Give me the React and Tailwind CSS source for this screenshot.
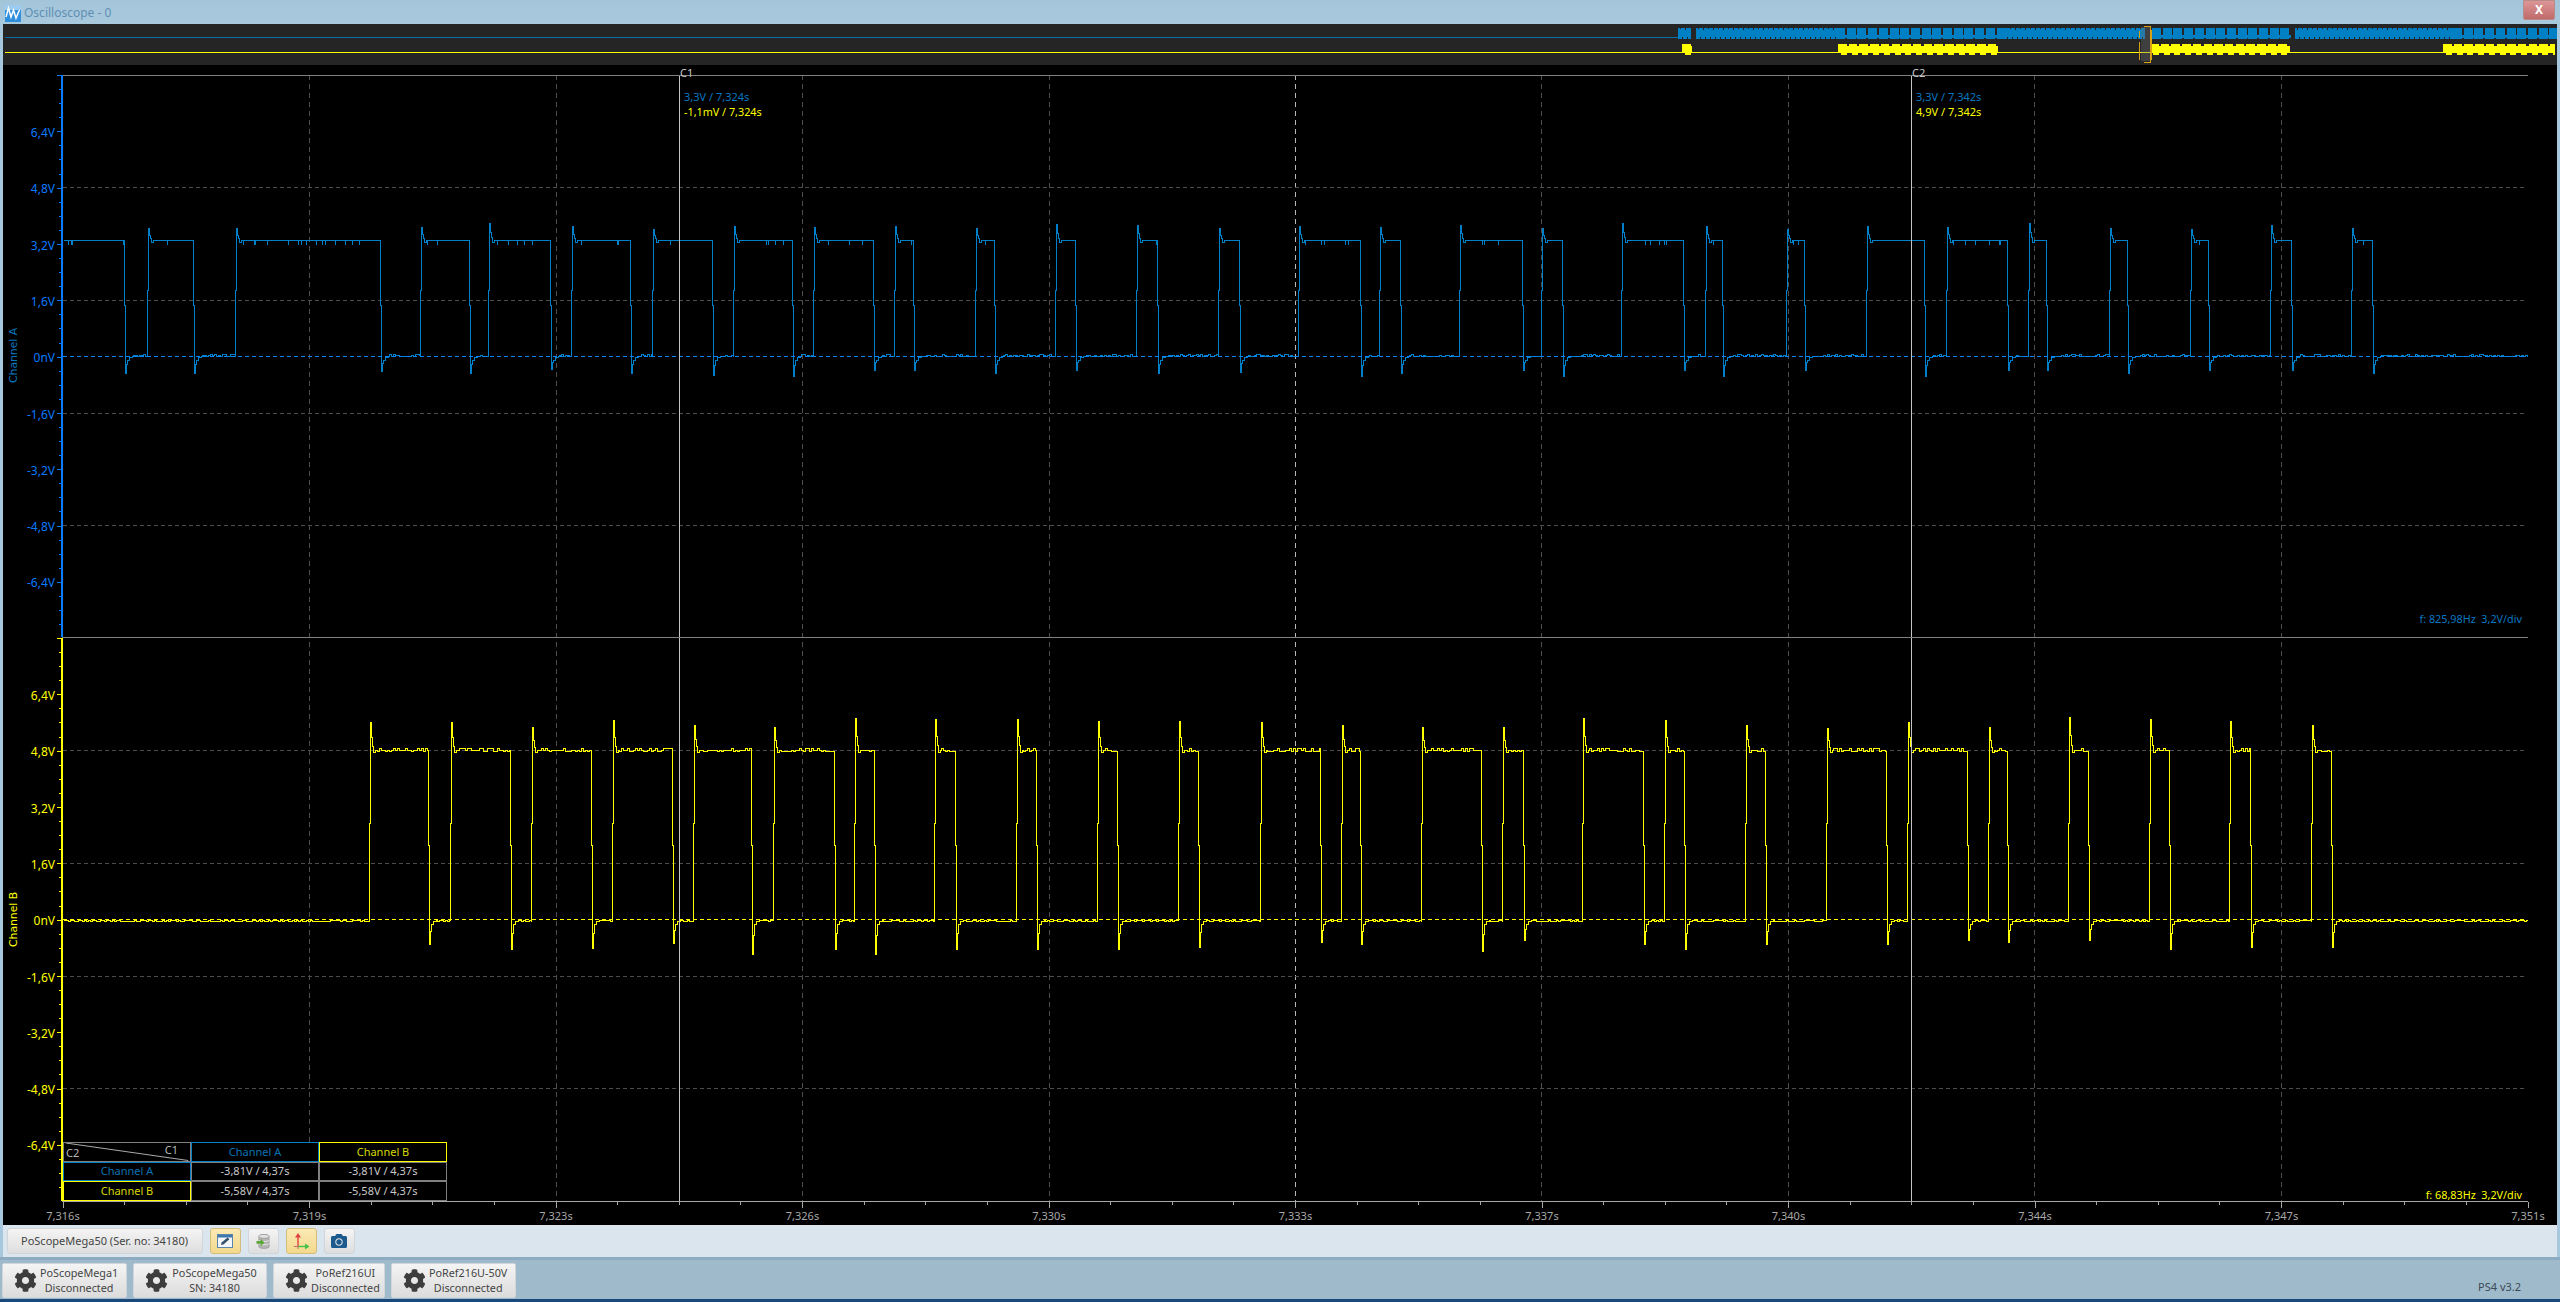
import React from 'react';
import { FaCog, FaCamera } from 'react-icons/fa';

// rise, fall, peak y, undershoot y
const BLUE_PULSES = [
  [null, 124, 0, 373], [148, 193, 228, 373], [236, 380, 228, 371], [421, 469, 227, 373], [489, 550, 223, 369],
  [572, 630, 226, 373], [653, 712, 229, 375], [734, 792, 226, 376], [814, 873, 227, 370], [895, 913, 226, 370],
  [976, 994, 228, 373], [1056, 1075, 224, 370], [1137, 1157, 225, 373], [1219, 1239, 228, 372], [1299, 1360, 226, 376],
  [1380, 1400, 227, 373], [1460, 1522, 225, 370], [1542, 1562, 228, 376], [1622, 1683, 223, 370], [1706, 1722, 226, 376],
  [1787, 1804, 229, 370], [1867, 1924, 226, 376], [1947, 2007, 227, 370], [2029, 2046, 223, 370], [2110, 2127, 228, 373],
  [2191, 2208, 229, 370], [2271, 2291, 225, 370], [2352, 2372, 228, 373],
];

const YELLOW_PULSES = [
  [370, 428, 722, 944], [451, 510, 722, 949], [532, 591, 727, 948], [613, 672, 720, 943], [694, 751, 725, 954],
  [774, 834, 727, 949], [855, 874, 718, 954], [935, 955, 719, 949], [1017, 1036, 719, 949], [1098, 1117, 721, 949],
  [1179, 1198, 721, 947], [1261, 1320, 722, 942], [1342, 1360, 725, 944], [1422, 1481, 727, 951], [1503, 1523, 727, 940],
  [1583, 1643, 718, 944], [1665, 1684, 720, 949], [1746, 1765, 725, 944], [1827, 1886, 728, 944], [1908, 1967, 722, 940],
  [1989, 2007, 727, 942], [2069, 2088, 717, 940], [2150, 2169, 719, 949], [2230, 2250, 721, 947], [2312, 2331, 725, 947],
];

const makeRng = (seed) => () => {
  seed = (seed * 1664525 + 1013904223) % 4294967296;
  return seed / 4294967296;
};

const buildTrace = (pulses, hi, lo, seed, yellow) => {
  const rng = makeRng(seed);
  const flatLow = (from, to, out) => {
    for (let x = from; x < to; x += 2) {
      const r = rng();
      if (yellow) {
        out.push(`H${x + 1}V${r < 0.5 ? lo : lo + 1}`);
      } else {
        out.push(`H${x + 1}V${r < 0.45 ? lo : r < 0.8 ? lo - 1 : lo - 2}`);
      }
    }
    out.push(`H${to}V${lo}`);
  };
  const flatHigh = (from, to, out) => {
    for (let x = from; x < to - 1; x += 1) {
      const r = rng();
      if (yellow) {
        if (x % 2 === 0) out.push(`H${x + 1}V${r < 0.4 ? hi : r < 0.7 ? hi + 1 : hi - 2}`);
      } else if (r < 0.07) {
        out.push(`H${x + 1}V${hi + 4}V${hi}`);
      }
    }
    out.push(`H${to}V${hi}`);
  };

  const d = [];
  let x = 63;
  pulses.forEach(([rise, fall, peak, under]) => {
    if (rise === null) {
      d.push(`M63 ${hi}`);
      flatHigh(63, fall, d);
    } else {
      if (d.length === 0) d.push(`M63 ${lo}`);
      flatLow(x, rise - 1, d);
      const jog = Math.round(lo - (lo - hi) * 0.57);
      d.push(`H${rise - 1}V${jog}H${rise}V${peak}`);
      d.push(`H${rise + 1}V${Math.round(peak + (hi - peak) * 0.55)}`);
      d.push(`H${rise + 2}V${Math.round(peak + (hi - peak) * 0.85)}`);
      d.push(`H${rise + 3}V${hi + 2}H${rise + 5}V${hi}`);
      flatHigh(rise + 5, fall, d);
    }
    const jog2 = Math.round(hi + (lo - hi) * 0.56);
    d.push(`H${fall}V${jog2}H${fall + 1}V${under}`);
    d.push(`H${fall + 2}V${Math.round(lo + (under - lo) * 0.45)}`);
    d.push(`H${fall + 3}V${lo + 4}H${fall + 5}V${lo + 1}H${fall + 8}V${lo}`);
    x = fall + 8;
  });
  flatLow(x, 2527, d);
  return d.join('');
};

const blueTrace = buildTrace(BLUE_PULSES, 240, 356, 7, false);
const yellowTrace = buildTrace(YELLOW_PULSES, 750, 920, 19, true);

const VERTICAL_GRID = [309.5, 556.5, 802.5, 1049.5, 1541.5, 1788.5, 2034.5, 2281.5];
const TIME_LABELS = ['7,316s', '7,319s', '7,323s', '7,326s', '7,330s', '7,333s', '7,337s', '7,340s', '7,344s', '7,347s', '7,351s'];
const VOLTS = ['6,4V', '4,8V', '3,2V', '1,6V', '0nV', '-1,6V', '-3,2V', '-4,8V', '-6,4V'];

const Overview = () => {
  const blueDense = [[1678, 1691], [1696, 1836], [2003, 2145], [2295, 2453]];
  const bluePulses = [[1836, 2001], [2152, 2290], [2453, 2555]];
  const yellowZones = [[1682, 1692], [1838, 1998], [2150, 2290], [2443, 2555]];
  const period = 10.7;
  const blocks = [];
  blueDense.forEach(([a, b]) => {
    blocks.push(<rect key={`d${a}`} x={a} y={28} width={b - a} height={11} fill="#0080c4" />);
    for (let x = a + 2; x < b - 1; x += 5) {
      blocks.push(<rect key={`n${a}-${x}`} x={x} y={28} width={1} height={x % 2 ? 2 : 1} fill="#252525" />);
      blocks.push(<rect key={`m${a}-${x}`} x={x + 2} y={37} width={1} height={2} fill="#252525" />);
    }
  });
  bluePulses.forEach(([a, b]) => {
    for (let x = a; x < b - 3; x += period) {
      blocks.push(<rect key={`p${x}`} x={x} y={28} width={9} height={11} fill="#0080c4" />);
      blocks.push(<rect key={`q${x}`} x={x + 9} y={35} width={1.7} height={3} fill="#0080c4" />);
    }
  });
  yellowZones.forEach(([a, b]) => {
    blocks.push(<rect key={`y${a}`} x={a} y={46} width={b - a} height={7} fill="#ffff00" />);
    for (let x = a; x < b - 2; x += period) {
      blocks.push(<rect key={`yt${x}`} x={x} y={44} width={Math.min(8.5, b - x)} height={2} fill="#ffff00" />);
      blocks.push(<rect key={`yb${x}`} x={x + 3} y={53} width={Math.min(6, b - x - 3)} height={2} fill="#ffff00" />);
    }
  });

  return (
    <svg viewBox="3 24 2554 41" className="block w-[2554px] h-[41px] bg-[#252525]" shapeRendering="crispEdges">
      <rect x={5} y={37} width={1673} height={1} fill="#0a6ea8" />
      <rect x={5} y={52} width={2550} height={1} fill="#ffff00" />
      {blocks}
      <rect x={2141} y={27} width={10} height={34} fill="#707070" fillOpacity="0.35" />
      <path d="M2144 26.5H2150.5V62H2144M2139.5 31V38M2139.5 42V60M2151.5 30V60" fill="none" stroke="#d8a014" strokeWidth="1" />
    </svg>
  );
};

const Plot = () => (
  <svg viewBox="3 65 2554 1160" className="block absolute inset-0 w-[2554px] h-[1160px]">
    <g shapeRendering="crispEdges" fill="none" strokeWidth="1">
      {VERTICAL_GRID.map((x) => (
        <line key={x} x1={x} x2={x} y1={75} y2={1201} stroke="#4d4d4d" strokeDasharray="5 4" />
      ))}
      <line x1={1295.5} x2={1295.5} y1={75} y2={1201} stroke="#b8b8b8" strokeDasharray="5 4" />
      {[187.5, 300.5, 413.5, 525.5, 750.5, 863.5, 976.5, 1088.5].map((y) => (
        <line key={y} x1={63} x2={2527} y1={y} y2={y} stroke="#4d4d4d" strokeDasharray="4 3" />
      ))}

      <path d={blueTrace} transform="translate(0.5 0.5)" stroke="#0080c8" />
      <path d={yellowTrace} transform="translate(0.5 0.5)" stroke="#ffff00" />

      <line x1={63} x2={2527} y1={356.5} y2={356.5} stroke="#0a84ff" strokeDasharray="4 3" />
      <line x1={63} x2={2527} y1={919.5} y2={919.5} stroke="#ffff00" strokeDasharray="4 3" />

      <line x1={679.5} x2={679.5} y1={75} y2={1201} stroke="#c4c4c4" />
      <line x1={1911.5} x2={1911.5} y1={75} y2={1201} stroke="#c4c4c4" />

      <line x1={62} x2={2528} y1={75.5} y2={75.5} stroke="#808080" />
      <line x1={62} x2={2528} y1={637.5} y2={637.5} stroke="#808080" />
      <line x1={62} x2={2528} y1={1201.5} y2={1201.5} stroke="#a8a8a8" />
      <line x1={62} x2={62} y1={75} y2={637} stroke="#0a7aff" strokeWidth="2" />
      <line x1={62} x2={62} y1={638} y2={1201} stroke="#ffff00" strokeWidth="2" />

      {Array.from({ length: 40 }, (_, i) => {
        const y = 75 + i * 14.08;
        return <line key={i} x1={i % 4 === 0 ? 57 : 59} x2={61} y1={Math.round(y) + 0.5} y2={Math.round(y) + 0.5} stroke="#0a7aff" />;
      })}
      {Array.from({ length: 40 }, (_, i) => {
        const y = 638 + i * 14.08;
        return <line key={i} x1={i % 4 === 0 ? 57 : 59} x2={61} y1={Math.round(y) + 0.5} y2={Math.round(y) + 0.5} stroke="#ffff00" />;
      })}
      {Array.from({ length: 41 }, (_, i) => {
        const x = 62.5 + i * 61.625;
        return <line key={i} x1={Math.round(x) + 0.5} x2={Math.round(x) + 0.5} y1={1202} y2={i % 4 === 0 ? 1208 : 1205} stroke="#a8a8a8" />;
      })}
    </g>

    <g fontFamily="'Noto Sans', sans-serif" fontSize="12">
      {VOLTS.map((v, i) => (
        <text key={v} x={55} y={133 + i * 56.3 + 4} textAnchor="end" fill="#0a7aff">{v}</text>
      ))}
      {VOLTS.map((v, i) => (
        <text key={v} x={55} y={696 + i * 56.3 + 4} textAnchor="end" fill="#ffff00">{v}</text>
      ))}
      {TIME_LABELS.map((t, i) => (
        <text key={t} x={63 + i * 246.5} y={1220} textAnchor="middle" fontSize="11" fill="#a8a8a8">{t}</text>
      ))}
      <text x={680} y={77} fontSize="11" fill="#c8c8c8">C1</text>
      <text x={1912} y={77} fontSize="11" fill="#c8c8c8">C2</text>
      <text x={684} y={101} fontSize="11" fill="#0a78c0">3,3V / 7,324s</text>
      <text x={684} y={116} fontSize="10.8" fill="#ffff00">-1,1mV / 7,324s</text>
      <text x={1916} y={101} fontSize="11" fill="#0a78c0">3,3V / 7,342s</text>
      <text x={1916} y={116} fontSize="11" fill="#ffff00">4,9V / 7,342s</text>
      <text x={2522} y={623} textAnchor="end" fontSize="10.8" fill="#0a78c0" xmlSpace="preserve">f: 825,98Hz  3,2V/div</text>
      <text x={2522} y={1199} textAnchor="end" fontSize="10.8" fill="#ffff00" xmlSpace="preserve">f: 68,83Hz  3,2V/div</text>
      <text transform="translate(17 383) rotate(-90)" fontFamily="'DejaVu Sans', sans-serif" fontSize="10.8" fill="#0a78c0">Channel A</text>
      <text transform="translate(17 947) rotate(-90)" fontFamily="'DejaVu Sans', sans-serif" fontSize="10.8" fill="#ffff00">Channel B</text>
    </g>
  </svg>
);

const Cell = ({ className = '', children }) => (
  <div className={`flex items-center justify-center border ${className}`}>{children}</div>
);

const ChannelTable = () => (
  <div className="absolute left-[60px] top-[1077px] grid grid-cols-[128px_128px_128px] grid-rows-[19.5px_19.5px_19.5px] bg-black text-[11px] text-[#c8c8c8]">
    <div className="relative border border-[#808080] overflow-hidden">
      <svg viewBox="0 0 126 18" className="absolute inset-0 w-full h-full">
        <line x1="0" y1="0" x2="126" y2="18" stroke="#b0b0b0" strokeWidth="1" />
      </svg>
      <span className="absolute right-[12px] -top-[1px] text-[#b8b8b8]">C1</span>
      <span className="absolute left-[2px] -bottom-[1px] text-[#b8b8b8]">C2</span>
    </div>
    <Cell className="border-[#0a80c4] text-[#0a72b4]">Channel A</Cell>
    <Cell className="border-[#ffff00] text-[#d8d800]">Channel B</Cell>
    <Cell className="border-[#0a80c4] text-[#0a72b4]">Channel A</Cell>
    <Cell className="border-[#808080]">-3,81V / 4,37s</Cell>
    <Cell className="border-[#808080]">-3,81V / 4,37s</Cell>
    <Cell className="border-[#ffff00] text-[#d8d800]">Channel B</Cell>
    <Cell className="border-[#808080]">-5,58V / 4,37s</Cell>
    <Cell className="border-[#808080]">-5,58V / 4,37s</Cell>
  </div>
);

const ToolButton = ({ active, children }) => (
  <button
    className={`flex w-[31px] h-[26px] items-center justify-center rounded-[3px] border ${
      active
        ? 'border-[#d4bd7c] bg-linear-to-b from-[#fbe9b4] to-[#f3d98c]'
        : 'border-[#cfd5da] bg-linear-to-b from-[#f4f4f4] to-[#dedede]'
    }`}
  >
    {children}
  </button>
);

const NoteIcon = () => (
  <svg viewBox="0 0 16 14" className="w-4 h-[14px]">
    <rect x="0.5" y="0.5" width="15" height="13" fill="#f2f6fa" stroke="#5a86ad" />
    <rect x="1" y="1" width="14" height="2.5" fill="#3f78ad" />
    <path d="M4 11 L4.6 8.6 L10.5 3.5 L12.4 5.2 L6.4 10.4 Z" fill="#34506c" />
  </svg>
);

const DatabaseIcon = () => (
  <svg viewBox="0 0 16 18" className="w-[15px] h-[17px]">
    <path d="M3 3.5 C3 1 14 1 14 3.5 V14.5 C14 17 3 17 3 14.5 Z" fill="#b4b4b4" stroke="#8a8a8a" strokeWidth="0.6" />
    <ellipse cx="8.5" cy="3.5" rx="5.5" ry="2" fill="#e4e4e4" stroke="#8a8a8a" strokeWidth="0.6" />
    <path d="M3 7.5 C3 9.5 14 9.5 14 7.5 M3 11 C3 13 14 13 14 11" fill="none" stroke="#f0f0f0" strokeWidth="0.9" />
    <path d="M0.5 8.5 H5 V6 L9 10 L5 14 V11.5 H0.5 Z" fill="#5ca836" />
  </svg>
);

const AxesIcon = () => (
  <svg viewBox="0 0 18 18" className="w-[18px] h-[18px]">
    <path d="M6 15 V4" stroke="#e24040" strokeWidth="1.4" fill="none" />
    <path d="M6 1 L9 5.5 H3 Z" fill="#e24040" />
    <path d="M6 14.5 H14" stroke="#43c04a" strokeWidth="1.4" fill="none" />
    <path d="M17.5 14.5 L13 11.6 V17.4 Z" fill="#43c04a" />
    <path d="M2 14.5 H6 V17" stroke="#c06a6a" strokeWidth="1" fill="none" />
  </svg>
);

const DeviceButton = ({ width, name, status }) => (
  <button
    className={`flex h-[35px] ${width} items-center gap-[3px] rounded-[2px] border border-[#d0d6da] bg-linear-to-b from-[#f4f4f4] to-[#dcdcdc] pl-[11px] pr-[8px] text-[#444]`}
  >
    <FaCog className="w-[23px] h-[23px] shrink-0 text-[#3d3d3d]" />
    <span className="flex-1 text-center text-[10.8px] leading-[15px] whitespace-nowrap">
      <span className="block">{name}</span>
      <span className="block">{status}</span>
    </span>
  </button>
);

export default function App() {
  return (
    <div className="flex flex-col w-[2560px] h-[1302px] overflow-hidden bg-[#a7c7dc] font-['Noto_Sans',sans-serif]">
      <header className="flex h-6 shrink-0 items-start bg-linear-to-b from-[#a3c5da] to-[#a9c9dd]">
        <svg viewBox="0 0 16 17" className="mt-[5px] ml-[5px] w-[16px] h-[17px]">
          <rect width="16" height="17" fill="#2f8fdc" />
          <rect width="16" height="5" fill="#9ccbf0" />
          <path d="M1 12 L3.5 3 L6 12 L8.5 5 L11 13 L14.5 5" fill="none" stroke="#fff" strokeWidth="1.5" />
        </svg>
        <span className="ml-[3px] mt-[4px] text-[12px] text-[#5f8fb4]">Oscilloscope - 0</span>
        <button className="ml-auto mr-[5px] flex h-[20px] w-[32px] items-center justify-center rounded-b-[2px] border border-[#b88a8a] bg-linear-to-b from-[#dc9696] to-[#c06a6a] text-[12px] font-bold text-white">
          X
        </button>
      </header>

      <main className="flex flex-1 flex-col mx-[3px] min-h-0">
        <Overview />
        <section className="relative h-[1160px] shrink-0 bg-black">
          <Plot />
          <ChannelTable />
        </section>
        <div className="flex h-[32px] shrink-0 items-center gap-[7px] bg-[#dbe5ee] pl-[3.5px]">
          <button className="flex h-[26px] w-[196px] items-center justify-center rounded-[3px] border border-[#cfd5da] bg-linear-to-b from-[#f4f4f4] to-[#dedede] text-[11px] text-[#444]">
            PoScopeMega50 (Ser. no: 34180)
          </button>
          <ToolButton active><NoteIcon /></ToolButton>
          <ToolButton><DatabaseIcon /></ToolButton>
          <ToolButton active><AxesIcon /></ToolButton>
          <ToolButton><FaCamera className="w-4 h-4 text-[#1c5a8e]" /></ToolButton>
        </div>
      </main>

      <footer className="flex h-[45px] shrink-0 flex-col border-t-[3px] border-[#8dabc1] bg-[#9ebacb]">
        <div className="flex flex-1 items-center gap-[6px] pl-[2px] pt-[1px]">
          <DeviceButton width="w-[125px]" name="PoScopeMega1" status="Disconnected" />
          <DeviceButton width="w-[134px]" name="PoScopeMega50" status="SN: 34180" />
          <DeviceButton width="w-[112px]" name="PoRef216UI" status="Disconnected" />
          <DeviceButton width="w-[125px]" name="PoRef216U-50V" status="Disconnected" />
          <span className="ml-auto mr-[39px] mt-[14px] text-[11px] text-[#3c4a56]">PS4 v3.2</span>
        </div>
        <div className="h-[3px] bg-[#1a4a7c]" />
      </footer>
    </div>
  );
}
